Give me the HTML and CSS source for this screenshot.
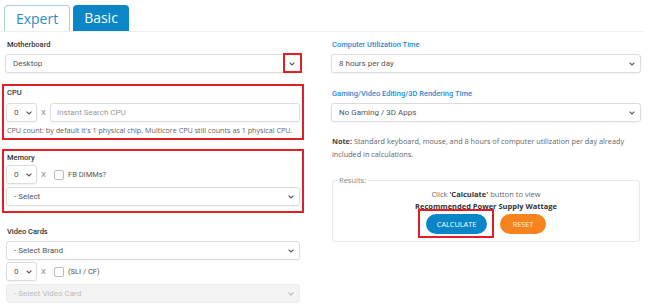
FILE: index.html
```html
<!DOCTYPE html>
<html lang="en">
<head>
    <meta charset="UTF-8">
    <meta name="viewport" content="width=device-width, initial-scale=1.0">
    <title>Power Supply Calculator</title>
    <link rel="stylesheet" href="styles.css">
</head>
<body>

    <div class="tabs">
        <div class="tab tab-expert">Expert</div>
        <div class="tab tab-basic">Basic</div>
    </div>

    <div class="main">
        <div class="col col-left">
            <div class="field field-mb">
                <label class="label">Motherboard</label>
                <div class="select">
                    <span>Desktop</span>
                    <span class="chev chev-marked"><svg width="6" height="4" viewBox="0 0 6 4"><polyline points="0.6,0.6 3,3 5.4,0.6" fill="none" stroke="#555" stroke-width="1.1"/></svg></span>
                </div>
            </div>

            <div class="field boxed box-cpu">
                <label class="label">CPU</label>
                <div class="row">
                    <div class="select select-qty">
                        <span>0</span>
                        <span class="chev"><svg width="6" height="4" viewBox="0 0 6 4"><polyline points="0.6,0.6 3,3 5.4,0.6" fill="none" stroke="#555" stroke-width="1.1"/></svg></span>
                    </div>
                    <span class="times">X</span>
                    <input class="input" type="text" placeholder="Instant Search CPU">
                </div>
                <p class="help">CPU count: by default it's 1 physical chip. Multicore CPU still counts as 1 physical CPU.</p>
            </div>

            <div class="field boxed box-mem">
                <label class="label label-tight">Memory</label>
                <div class="row">
                    <div class="select select-qty">
                        <span>0</span>
                        <span class="chev"><svg width="6" height="4" viewBox="0 0 6 4"><polyline points="0.6,0.6 3,3 5.4,0.6" fill="none" stroke="#555" stroke-width="1.1"/></svg></span>
                    </div>
                    <span class="times">X</span>
                    <span class="check"></span>
                    <span class="check-label">FB DIMMs?</span>
                </div>
                <div class="select select-full">
                    <span>- Select</span>
                    <span class="chev"><svg width="6" height="4" viewBox="0 0 6 4"><polyline points="0.6,0.6 3,3 5.4,0.6" fill="none" stroke="#555" stroke-width="1.1"/></svg></span>
                </div>
            </div>

            <div class="field field-video">
                <label class="label">Video Cards</label>
                <div class="select select-full select-first">
                    <span>- Select Brand</span>
                    <span class="chev"><svg width="6" height="4" viewBox="0 0 6 4"><polyline points="0.6,0.6 3,3 5.4,0.6" fill="none" stroke="#555" stroke-width="1.1"/></svg></span>
                </div>
                <div class="row row-video">
                    <div class="select select-qty">
                        <span>0</span>
                        <span class="chev"><svg width="6" height="4" viewBox="0 0 6 4"><polyline points="0.6,0.6 3,3 5.4,0.6" fill="none" stroke="#555" stroke-width="1.1"/></svg></span>
                    </div>
                    <span class="times">X</span>
                    <span class="check"></span>
                    <span class="check-label">(SLI / CF)</span>
                </div>
                <div class="select select-full select-disabled">
                    <span>- Select Video Card</span>
                    <span class="chev"><svg width="6" height="4" viewBox="0 0 6 4"><polyline points="0.6,0.6 3,3 5.4,0.6" fill="none" stroke="#bbb" stroke-width="1.1"/></svg></span>
                </div>
            </div>
        </div>

        <div class="col col-right">
            <div class="field field-mb">
                <label class="label label-blue">Computer Utilization Time</label>
                <div class="select">
                    <span>8 hours per day</span>
                    <span class="chev"><svg width="6" height="4" viewBox="0 0 6 4"><polyline points="0.6,0.6 3,3 5.4,0.6" fill="none" stroke="#555" stroke-width="1.1"/></svg></span>
                </div>
            </div>

            <div class="field field-gaming">
                <label class="label label-blue">Gaming/Video Editing/3D Rendering Time</label>
                <div class="select">
                    <span>No Gaming / 3D Apps</span>
                    <span class="chev"><svg width="6" height="4" viewBox="0 0 6 4"><polyline points="0.6,0.6 3,3 5.4,0.6" fill="none" stroke="#555" stroke-width="1.1"/></svg></span>
                </div>
            </div>

            <p class="note"><b>Note:</b> Standard keyboard, mouse, and 8 hours of computer utilization per day already included in calculations.</p>

            <fieldset class="results">
                <legend>Results:</legend>
                <div class="results-body">
                    <p class="results-text results-top">Click <b>'Calculate'</b> button to view</p>
                    <p class="results-text"><b>Recommended Power Supply Wattage</b></p>
                    <div class="buttons">
                        <button class="btn btn-calc">CALCULATE</button>
                        <button class="btn btn-reset">RESET</button>
                    </div>
                </div>
            </fieldset>
        </div>
    </div>

</body>
</html>
```

FILE: styles.css
```css
body {
    margin: 0;
    font-family: Roboto, "Liberation Sans", sans-serif;
    background-color: #fff;
    color: #444;
}
.tabs {
    display: flex;
    gap: 3px;
    padding: 5px 0 0 4px;
    margin-right: 17px;
    border-bottom: 1px solid #eee;
}
.tab {
    height: 26px;
    box-sizing: border-box;
    font-family: "Open Sans", sans-serif;
    font-size: 14px;
    line-height: 26px;
    text-align: center;
    border-radius: 4px 4px 0 0;
}
.tab-expert {
    width: 66px;
    border: 1px solid #a9d0e8;
    border-bottom: none;
    line-height: 25px;
    color: #2f8bc2;
}
.tab-basic {
    width: 56px;
    background-color: #0a86c8;
    color: white;
}
.main {
    display: flex;
    gap: 30px;
    padding-left: 5px;
}
.col-left {
    width: 296px;
}
.col-right {
    width: 310px;
}
.label {
    display: block;
    padding-left: 2px;
    font-size: 7.5px;
    font-weight: 500;
    line-height: 12px;
    color: #333;
    margin-bottom: 3px;
}
.label-blue {
    color: #2b8ad0;
    padding-left: 1px;
}
.label-tight {
    margin-bottom: 1px;
}
.field-mb {
    margin-top: 7px;
}
.select {
    display: flex;
    justify-content: space-between;
    align-items: center;
    height: 19px;
    box-sizing: border-box;
    padding: 0 5px 0 7px;
    border: 1px solid #dcdcdc;
    border-radius: 3px;
    box-shadow: 0 1px 2px rgba(0, 0, 0, 0.05);
    font-size: 8px;
    color: #555;
    background: #fff;
}
.chev {
    display: flex;
}
.chev-marked {
    position: relative;
}
.chev-marked::after {
    content: "";
    position: absolute;
    top: -9px;
    bottom: -7px;
    left: -6px;
    right: -7px;
    border: 2px solid #e41e26;
}
.boxed {
    outline: 2px solid #e41e26;
    outline-offset: 1px;
}
.box-cpu {
    margin-top: 14px;
    padding-bottom: 1px;
}
.box-mem {
    margin-top: 15px;
    padding-bottom: 4px;
}
.row {
    display: flex;
    align-items: center;
    padding-right: 1px;
}
.box-cpu .label {
    margin-bottom: 4px;
}
.select-qty {
    width: 31px;
    padding: 0 4px 0 7px;
    margin-left: 1px;
}
.times {
    margin: 0 4px;
    font-size: 8px;
    color: #888;
}
.input {
    flex: 1;
    height: 19px;
    box-sizing: border-box;
    margin: 0;
    padding: 0 6px;
    border: 1px solid #dcdcdc;
    border-radius: 3px;
    font-family: Roboto, sans-serif;
    font-size: 8px;
    color: #555;
    box-shadow: 0 1px 2px rgba(0, 0, 0, 0.05);
}
.input::placeholder {
    color: #999;
}
.help {
    margin: 2px 0 0 2px;
    font-family: "Open Sans", sans-serif;
    font-size: 7.2px;
    line-height: 12px;
    color: #666;
}
.check {
    width: 10px;
    height: 10px;
    box-sizing: border-box;
    margin-left: 4px;
    border: 1px solid #bbb;
    border-radius: 2px;
}
.check-label {
    margin-left: 4px;
    font-size: 7.5px;
    color: #555;
}
.select-full {
    margin: 3px 1px 0 1px;
}
.field-video {
    margin-top: 16px;
}
.select-first {
    margin-top: 0;
}
.row-video {
    margin-top: 2px;
}
.select-disabled {
    background-color: #f3f3f3;
    border-color: #ececec;
    color: #bbb;
    box-shadow: none;
}
.field-gaming {
    margin-top: 15px;
}
.note {
    margin: 13px 0 0 1px;
    font-family: "Open Sans", sans-serif;
    font-size: 7.3px;
    line-height: 13px;
    color: #666;
}
.note b {
    color: #444;
}
.results {
    margin: 13px 1px 0 1px;
    padding: 0 5px 7px 5px;
    border: 1px solid #e8e8e8;
    border-radius: 3px;
    font-family: "Open Sans", sans-serif;
}
.results legend {
    padding: 0 1px;
    font-size: 7.5px;
    line-height: 12px;
    color: #888;
}
.results-body {
    text-align: center;
}
.results-text {
    margin: 0;
    font-size: 7.5px;
    line-height: 12px;
    color: #666;
}
.results-top {
    margin-top: 2px;
}
.results-text b {
    color: #333;
}
.buttons {
    display: flex;
    justify-content: center;
    gap: 13px;
    margin-top: 2px;
}
.btn {
    height: 20px;
    border: none;
    border-radius: 10px;
    font-family: "Open Sans", sans-serif;
    font-size: 7.3px;
    color: white;
    cursor: pointer;
}
.btn-calc {
    position: relative;
    width: 61px;
    background-color: #0a86c8;
}
.btn-calc::after {
    content: "";
    position: absolute;
    top: -5px;
    bottom: -4px;
    left: -8px;
    right: -7px;
    border: 2px solid #e41e26;
}
.btn-reset {
    width: 46px;
    background-color: #f7831e;
    color: #fff3e2;
}
```
